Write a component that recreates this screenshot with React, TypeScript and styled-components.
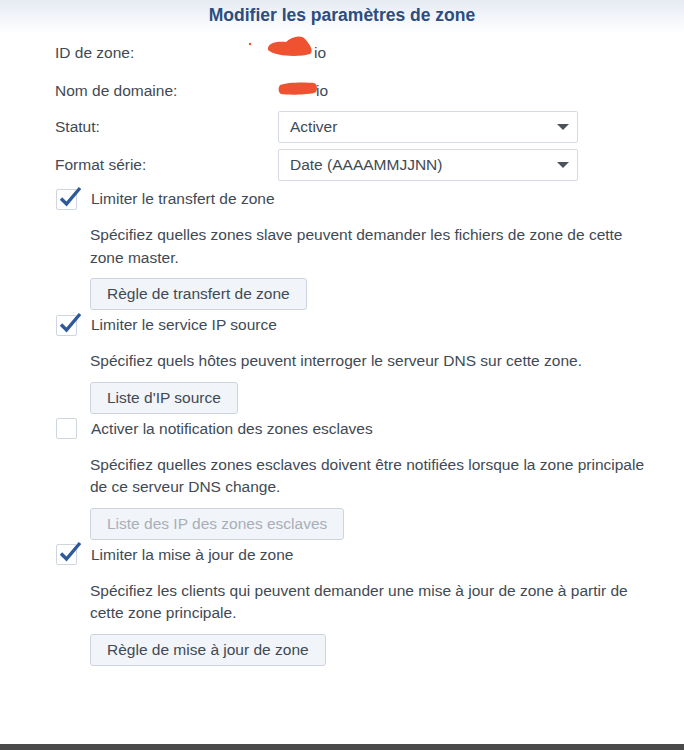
import React from "react";
import styled, { createGlobalStyle } from "styled-components";

const Global = createGlobalStyle`
  html, body { margin: 0; padding: 0; background: #fff; }
  body { font-family: "Liberation Sans", Arial, sans-serif; color: #3f4852; }
`;

const Page = styled.div`
  width: 684px;
  height: 750px;
  display: flex;
  flex-direction: column;
  background: #fff;
  overflow: hidden;
`;

const Header = styled.div`
  height: 34px;
  flex: none;
  display: flex;
  align-items: center;
  justify-content: center;
  background: linear-gradient(#e6ebf3, #ffffff);
`;

const Title = styled.h1`
  margin: 0;
  margin-top: -3px;
  font-size: 17.5px;
  font-weight: 700;
  color: #2c4d7f;
`;

const Body = styled.div`
  flex: 1;
  display: flex;
  flex-direction: column;
  padding: 3px 0 0 55px;
  font-size: 15.5px;
`;

const FieldRow = styled.div<{ $mt?: number }>`
  display: grid;
  grid-template-columns: 223px 300px;
  align-items: center;
  height: 32px;
  margin-top: ${(p) => p.$mt ?? 0}px;
`;

const Label = styled.span`
  color: #414a54;
`;

const Value = styled.span`
  display: flex;
  align-items: center;
  position: relative;
  color: #414a54;
`;

const Select = styled.div`
  box-sizing: border-box;
  height: 32px;
  border: 1px solid #d5dae2;
  border-radius: 2px;
  display: flex;
  align-items: center;
  justify-content: space-between;
  padding: 0 8px 0 11px;
  color: #414a54;
`;

const Caret = styled.span`
  width: 0;
  height: 0;
  border-left: 6px solid transparent;
  border-right: 6px solid transparent;
  border-top: 6px solid #4a525b;
`;

const CheckRow = styled.label<{ $mt: number }>`
  display: flex;
  align-items: center;
  gap: 14px;
  height: 24px;
  margin-top: ${(p) => p.$mt}px;
  color: #414a54;
`;

const Box = styled.span`
  box-sizing: border-box;
  width: 21px;
  height: 21px;
  margin-left: 1px;
  border: 1px solid #cfd6df;
  border-radius: 2px;
  background: #fff;
  position: relative;
  flex: none;
`;

const Tick = styled.svg`
  position: absolute;
  left: 1px;
  top: -5px;
  width: 24px;
  height: 22px;
`;

const Indent = styled.div`
  padding-left: 35px;
  display: flex;
  flex-direction: column;
  align-items: flex-start;
`;

const Desc = styled.p`
  margin: 13px 0 0;
  line-height: 22.5px;
  color: #414a54;
  max-width: 580px;
  white-space: nowrap;
`;

const Button = styled.button<{ $disabled?: boolean }>`
  box-sizing: border-box;
  margin-top: 9px;
  height: 32px;
  padding: 0 16px;
  border: 1px solid #cdd4de;
  border-radius: 3px;
  background: #f1f4f9;
  font: inherit;
  font-size: 15.5px;
  color: ${(p) => (p.$disabled ? "#a8afb8" : "#414a54")};
`;

const Footer = styled.div`
  height: 6px;
  flex: none;
  background: #4a4a4a;
`;

const Redact = styled.svg`
  position: absolute;
`;

function Check({ checked }: { checked: boolean }) {
  return (
    <Box>
      {checked && (
        <Tick viewBox="0 0 24 22">
          <path d="M3 13.5 L8.5 19 L22 3" fill="none" stroke="#2f5a9a" strokeWidth="3.4" strokeLinejoin="miter" />
        </Tick>
      )}
    </Box>
  );
}

type Section = {
  label: string;
  checked: boolean;
  desc: string[];
  button: string;
  disabled?: boolean;
  mt: number;
};

const sections: Section[] = [
  {
    label: "Limiter le transfert de zone",
    checked: true,
    desc: ["Spécifiez quelles zones slave peuvent demander les fichiers de zone de cette", "zone master."],
    button: "Règle de transfert de zone",
    mt: 6,
  },
  {
    label: "Limiter le service IP source",
    checked: true,
    desc: ["Spécifiez quels hôtes peuvent interroger le serveur DNS sur cette zone."],
    button: "Liste d'IP source",
    mt: 3,
  },
  {
    label: "Activer la notification des zones esclaves",
    checked: false,
    desc: ["Spécifiez quelles zones esclaves doivent être notifiées lorsque la zone principale", "de ce serveur DNS change."],
    button: "Liste des IP des zones esclaves",
    disabled: true,
    mt: 3,
  },
  {
    label: "Limiter la mise à jour de zone",
    checked: true,
    desc: ["Spécifiez les clients qui peuvent demander une mise à jour de zone à partir de", "cette zone principale."],
    button: "Règle de mise à jour de zone",
    mt: 3,
  },
];

export default function App() {
  return (
    <Page>
      <Global />
      <Header>
        <Title>Modifier les paramètres de zone</Title>
      </Header>
      <Body>
        <FieldRow>
          <Label>ID de zone:</Label>
          <Value>
            <Redact width="70" height="26" viewBox="0 0 70 26" style={{ left: -32, top: -11 }}>
              <circle cx="4" cy="11" r="1.2" fill="#ee5230" />
              <path d="M22 17 C21 10 30 8 40 9 C46 3 56 1 60 7 C64 12 68 18 64 21 C54 24 30 24 22 17 Z" fill="#ee5230" />
            </Redact>
            <span style={{ marginLeft: 36 }}>io</span>
          </Value>
        </FieldRow>
        <FieldRow $mt={6}>
          <Label>Nom de domaine:</Label>
          <Value>
            <Redact width="44" height="20" viewBox="0 0 44 20" style={{ left: -1, top: -2 }}>
              <path d="M3 5 C10 2 28 2 37 3 C41 4 41 12 37 13 C28 15 10 15 4 14 C1 12 1 8 3 5 Z" fill="#ee5230" />
            </Redact>
            <span style={{ marginLeft: 38 }}>io</span>
          </Value>
        </FieldRow>
        <FieldRow $mt={4}>
          <Label>Statut:</Label>
          <Select>
            <span>Activer</span>
            <Caret />
          </Select>
        </FieldRow>
        <FieldRow $mt={6}>
          <Label>Format série:</Label>
          <Select>
            <span>Date (AAAAMMJJNN)</span>
            <Caret />
          </Select>
        </FieldRow>
        {sections.map((s) => (
          <React.Fragment key={s.label}>
            <CheckRow $mt={s.mt}>
              <Check checked={s.checked} />
              <span>{s.label}</span>
            </CheckRow>
            <Indent>
              <Desc>
                {s.desc.map((l, i) => (
                  <React.Fragment key={i}>
                    {i > 0 && <br />}
                    {l}
                  </React.Fragment>
                ))}
              </Desc>
              <Button $disabled={s.disabled}>{s.button}</Button>
            </Indent>
          </React.Fragment>
        ))}
      </Body>
      <Footer />
    </Page>
  );
}
